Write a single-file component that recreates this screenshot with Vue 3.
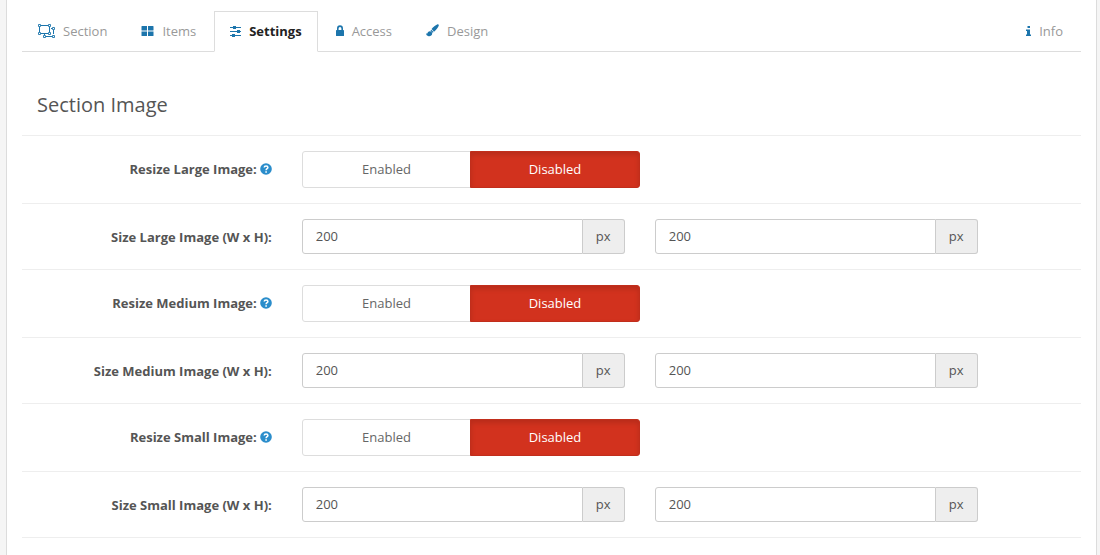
<script setup>
import { reactive, ref } from 'vue'

const active = ref('section-settings')

const tabs = [
  { id: 'section', label: 'Section' },
  { id: 'items', label: 'Items' },
  { id: 'section-settings', label: 'Settings' },
  { id: 'access', label: 'Access' },
  { id: 'design', label: 'Design' },
  { id: 'info', label: 'Info' }
]

const images = reactive([
  { key: 'large', name: 'Large', resize: false, width: '200', height: '200' },
  { key: 'medium', name: 'Medium', resize: false, width: '200', height: '200' },
  { key: 'small', name: 'Small', resize: false, width: '200', height: '200' }
])
</script>

<template>
  <main class="panel">
    <nav class="tabs">
      <a
        v-for="tab in tabs"
        :key="tab.id"
        :href="'#' + tab.id"
        class="tab"
        :class="[tab.id, { active: active === tab.id }]"
        :aria-current="active === tab.id ? 'page' : undefined"
        @click.prevent="active = tab.id"
      >
        <svg v-if="tab.id === 'section'" class="icon" width="17" height="14" viewBox="0 0 17 14" aria-hidden="true">
          <g fill="none" stroke="currentColor">
            <path d="M3 1.5H10M1.5 3V8M3 9.5H10M11.5 3V8M13 4.5H14M15.500 6V10M14 12.500H8M6.500 11V10" />
            <path stroke-width=".9" d="M.5.5h2v2h-2zM10.500.5h2v2h-2zM.5 8.500h2v2h-2zM10.500 8.500h2v2h-2zM14.500 3.500h2v2h-2zM14.500 11.500h2v2h-2zM5.500 11.500h2v2h-2z" />
          </g>
        </svg>
        <svg v-else-if="tab.id === 'items'" class="icon" width="13" height="12" viewBox="0 0 13 12" aria-hidden="true">
          <path fill="currentColor" d="M1 1h5v4.500H1a.5.5 0 0 1-.5-.5V1.500A.5.5 0 0 1 1 1zM7 1h5a.5.5 0 0 1 .5.5V5a.5.5 0 0 1-.5.5H7zM.5 6.500H6V11H1a.5.5 0 0 1-.5-.5zM7 6.500h5.500v4a.5.5 0 0 1-.5.5H7z" />
        </svg>
        <svg v-else-if="tab.id === 'section-settings'" class="icon" width="11" height="12" viewBox="0 0 11 12" aria-hidden="true">
          <path fill="none" stroke="currentColor" d="M0 2.500h11M0 6.500h11M0 10.500h11" />
          <path fill="currentColor" d="M3 1h3v3H3zM7 5h3v3H7zM2 9h3v3H2z" />
        </svg>
        <svg v-else-if="tab.id === 'access'" class="icon" width="8" height="12" viewBox="0 0 8 12" aria-hidden="true">
          <path fill="none" stroke="currentColor" stroke-width="1.600" d="M1.800 6V3.500a2.200 2.400 0 0 1 4.400 0V6" />
          <rect y="5" width="8" height="6" rx=".6" fill="currentColor" />
        </svg>
        <svg v-else-if="tab.id === 'design'" class="icon" width="13" height="13" viewBox="0 0 14 14" aria-hidden="true">
          <path fill="currentColor" d="M12 .5c1-.5 2.100.4 1.700 1.500-.8 2.200-2.700 4.500-5 6.300L6 5.500C7.800 3 10.200 1.100 12 .5zM5.600 6.100 8.200 8.700l-1.100.8-2.200-2.200zM4.300 7.700C5.700 7.800 6.800 8.900 6.700 10.300c-.2 2.200-2 3.200-3.900 2.900C1.100 12.900.1 11.700 0 10c.8.6 1.400.5 1.700-.3.400-1.300 1.300-2.100 2.600-2z" />
        </svg>
        <svg v-else class="icon" width="5" height="12" viewBox="0 0 5 12" aria-hidden="true">
          <path fill="currentColor" d="M1.500 1H4v2H1.500zM0 4.500H4V9.500h1V11H0V9.500h1V6H0z" />
        </svg>
        <span>{{ tab.label }}</span>
      </a>
    </nav>

    <form class="form" @submit.prevent>
      <h1 class="title">Section Image</h1>
      <template v-for="image in images" :key="image.key">
        <div class="row resize" role="group" :aria-labelledby="'resize-' + image.key">
          <div class="caption">
            <span :id="'resize-' + image.key">Resize {{ image.name }} Image:</span>
            <button type="button" class="help" :aria-label="'Help on resizing the ' + image.key + ' image'">
              <svg width="12" height="12" viewBox="0 0 12 12" aria-hidden="true">
                <circle cx="6" cy="6" r="5.800" fill="#2a8dcb" />
                <path fill="none" stroke="#fff" stroke-width="1.500" d="M4.200 4.500C4.300 2.300 7.900 2.400 7.900 4.400 7.900 5.700 6.100 5.600 6.100 7.200" />
                <path fill="#fff" d="M5.300 8.200h1.600v1.500H5.300z" />
              </svg>
            </button>
          </div>
          <div class="toggle">
            <button type="button" class="choice" :class="{ on: image.resize }" :aria-pressed="image.resize" @click="image.resize = true">Enabled</button>
            <button type="button" class="choice" :class="{ off: !image.resize }" :aria-pressed="!image.resize" @click="image.resize = false">Disabled</button>
          </div>
        </div>
        <div class="row">
          <label class="caption" :for="'width-' + image.key">Size {{ image.name }} Image (W x H):</label>
          <div class="field">
            <input :id="'width-' + image.key" v-model="image.width" type="text" class="input" />
            <span class="unit">px</span>
          </div>
          <div class="field">
            <input v-model="image.height" type="text" class="input" :aria-label="image.name + ' image height'" />
            <span class="unit">px</span>
          </div>
        </div>
      </template>
    </form>
  </main>
</template>

<style>
body {
  background: #f5f5f5;
}
</style>

<style scoped>
.panel,
.panel * {
  box-sizing: border-box;
}

.panel {
  min-height: 100vh;
  margin: 0 3px 0 6px;
  padding: 11px 15px 17px;
  border: solid #dcdcdc;
  border-width: 0 1px;
  background: #fff;
  color: #555;
  font: 13px/20px "Open Sans", "Noto Sans", sans-serif;
}

.tabs {
  display: flex;
  gap: 2px;
  padding-right: 2px;
  border-bottom: 1px solid #ddd;
}

.tab {
  display: flex;
  align-items: center;
  gap: 8px;
  height: 41px;
  margin-bottom: -1px;
  padding: 0 15px 2px;
  border: 1px solid transparent;
  color: #999;
  text-decoration: none;
}

.tab.active {
  border-color: #ddd;
  border-bottom-color: #fff;
  color: #222;
  font-weight: 700;
}

.tab.info {
  margin-left: auto;
}

.icon {
  flex: none;
  color: #1c75ac;
}

.title {
  margin: 0;
  padding: 38px 15px 15px;
  border-bottom: 1px solid #eee;
  font-size: 20px;
  font-weight: 400;
  line-height: 30px;
}

.row {
  display: grid;
  grid-template-columns: 3fr 4fr 4fr 1fr;
  align-items: center;
  padding: 15px 0;
  border-bottom: 1px solid #eee;
}

.caption {
  display: flex;
  align-items: center;
  justify-content: flex-end;
  gap: 3px;
  padding-right: 15px;
  font-weight: 700;
}

.resize .caption {
  padding-bottom: 2px;
}

.help {
  display: flex;
  padding: 0;
  border: 0;
  background: none;
  cursor: pointer;
}

.toggle {
  display: flex;
  margin-left: 15px;
}

.choice {
  flex: 1;
  height: 37px;
  padding: 0 0 2px;
  border: 1px solid #ddd;
  background: #fff;
  color: #666;
  font: inherit;
  cursor: pointer;
}

.choice:first-child {
  border-radius: 3px 0 0 3px;
}

.choice:last-child {
  margin-left: -1px;
  border-radius: 0 3px 3px 0;
}

.choice.on {
  border-color: #4c9a4c;
  background: #5cb85c;
  color: #fff;
}

.choice.off {
  border-color: #c12e1c;
  background: #d2321e;
  box-shadow: inset 0 3px 5px rgba(0, 0, 0, 0.125);
  color: #fff;
}

.field {
  display: flex;
  height: 35px;
  margin: 0 15px;
}

.input {
  flex: 1;
  min-width: 0;
  padding: 0 13px 2px;
  border: 1px solid #ccc;
  border-radius: 3px 0 0 3px;
  background: #fff;
  color: #555;
  font: inherit;
}

.unit {
  width: 42px;
  border: 1px solid #ccc;
  border-left: 0;
  border-radius: 0 3px 3px 0;
  background: #eee;
  line-height: 33px;
  text-align: center;
}
</style>
